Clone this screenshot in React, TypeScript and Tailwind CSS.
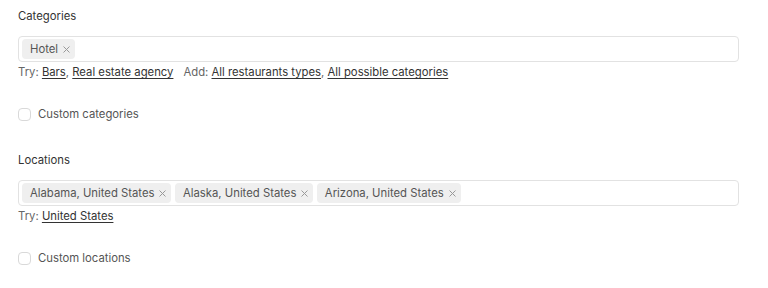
import { useState } from 'react';

type Link = { label: string };

function Tag({ label }: { label: string }) {
  return (
    <span className="flex h-5 items-center gap-[5px] rounded-sm bg-[#efefef] pl-2 pr-[5px] text-[11.3px] text-[#555]">
      {label}
      <svg width="7" height="7" viewBox="0 0 7 7" className="mt-px text-[#999]">
        <path d="M0.5 0.5L6.5 6.5M6.5 0.5L0.5 6.5" stroke="currentColor" strokeWidth="1" />
      </svg>
    </span>
  );
}

function Links({ items }: { items: Link[] }) {
  return (
    <>
      {items.map((l, i) => (
        <span key={l.label}>
          <a className="cursor-pointer text-[#333] underline underline-offset-2">{l.label}</a>
          {i < items.length - 1 && ', '}
        </span>
      ))}
    </>
  );
}

function Section({
  title,
  tags,
  tryLinks,
  addLinks,
  customLabel,
}: {
  title: string;
  tags: string[];
  tryLinks: Link[];
  addLinks?: Link[];
  customLabel: string;
}) {
  const [checked, setChecked] = useState(false);
  return (
    <div className="h-[144px] pt-[6px]">
      <div className="h-5 text-[11.3px] leading-5 text-[#333]">{title}</div>
      <div className="mt-[10px] flex h-[26px] items-center gap-[3.5px] rounded-sm border border-[#e2e2e2] bg-white px-[3px]">
        {tags.map((t) => (
          <Tag key={t} label={t} />
        ))}
      </div>
      <div className="mt-px h-[18px] text-[11.3px] leading-[18px] text-[#666]">
        Try: <Links items={tryLinks} />
        {addLinks && (
          <span className="ml-[10px]">
            Add: <Links items={addLinks} />
          </span>
        )}
      </div>
      <label className="mt-[27px] flex h-[13px] cursor-pointer items-center gap-[7px] text-[11.3px] text-[#555]">
        <input
          type="checkbox"
          checked={checked}
          onChange={() => setChecked(!checked)}
          className="h-[13px] w-[13px] appearance-none rounded-sm border border-[#d9d9d9] bg-white"
        />
        {customLabel}
      </label>
    </div>
  );
}

export default function App() {
  return (
    <div className="min-h-screen bg-white pl-[18px] pr-[29px] font-['Inter',sans-serif]">
      <Section
        title="Categories"
        tags={['Hotel']}
        tryLinks={[{ label: 'Bars' }, { label: 'Real estate agency' }]}
        addLinks={[{ label: 'All restaurants types' }, { label: 'All possible categories' }]}
        customLabel="Custom categories"
      />
      <Section
        title="Locations"
        tags={['Alabama, United States', 'Alaska, United States', 'Arizona, United States']}
        tryLinks={[{ label: 'United States' }]}
        customLabel="Custom locations"
      />
    </div>
  );
}
